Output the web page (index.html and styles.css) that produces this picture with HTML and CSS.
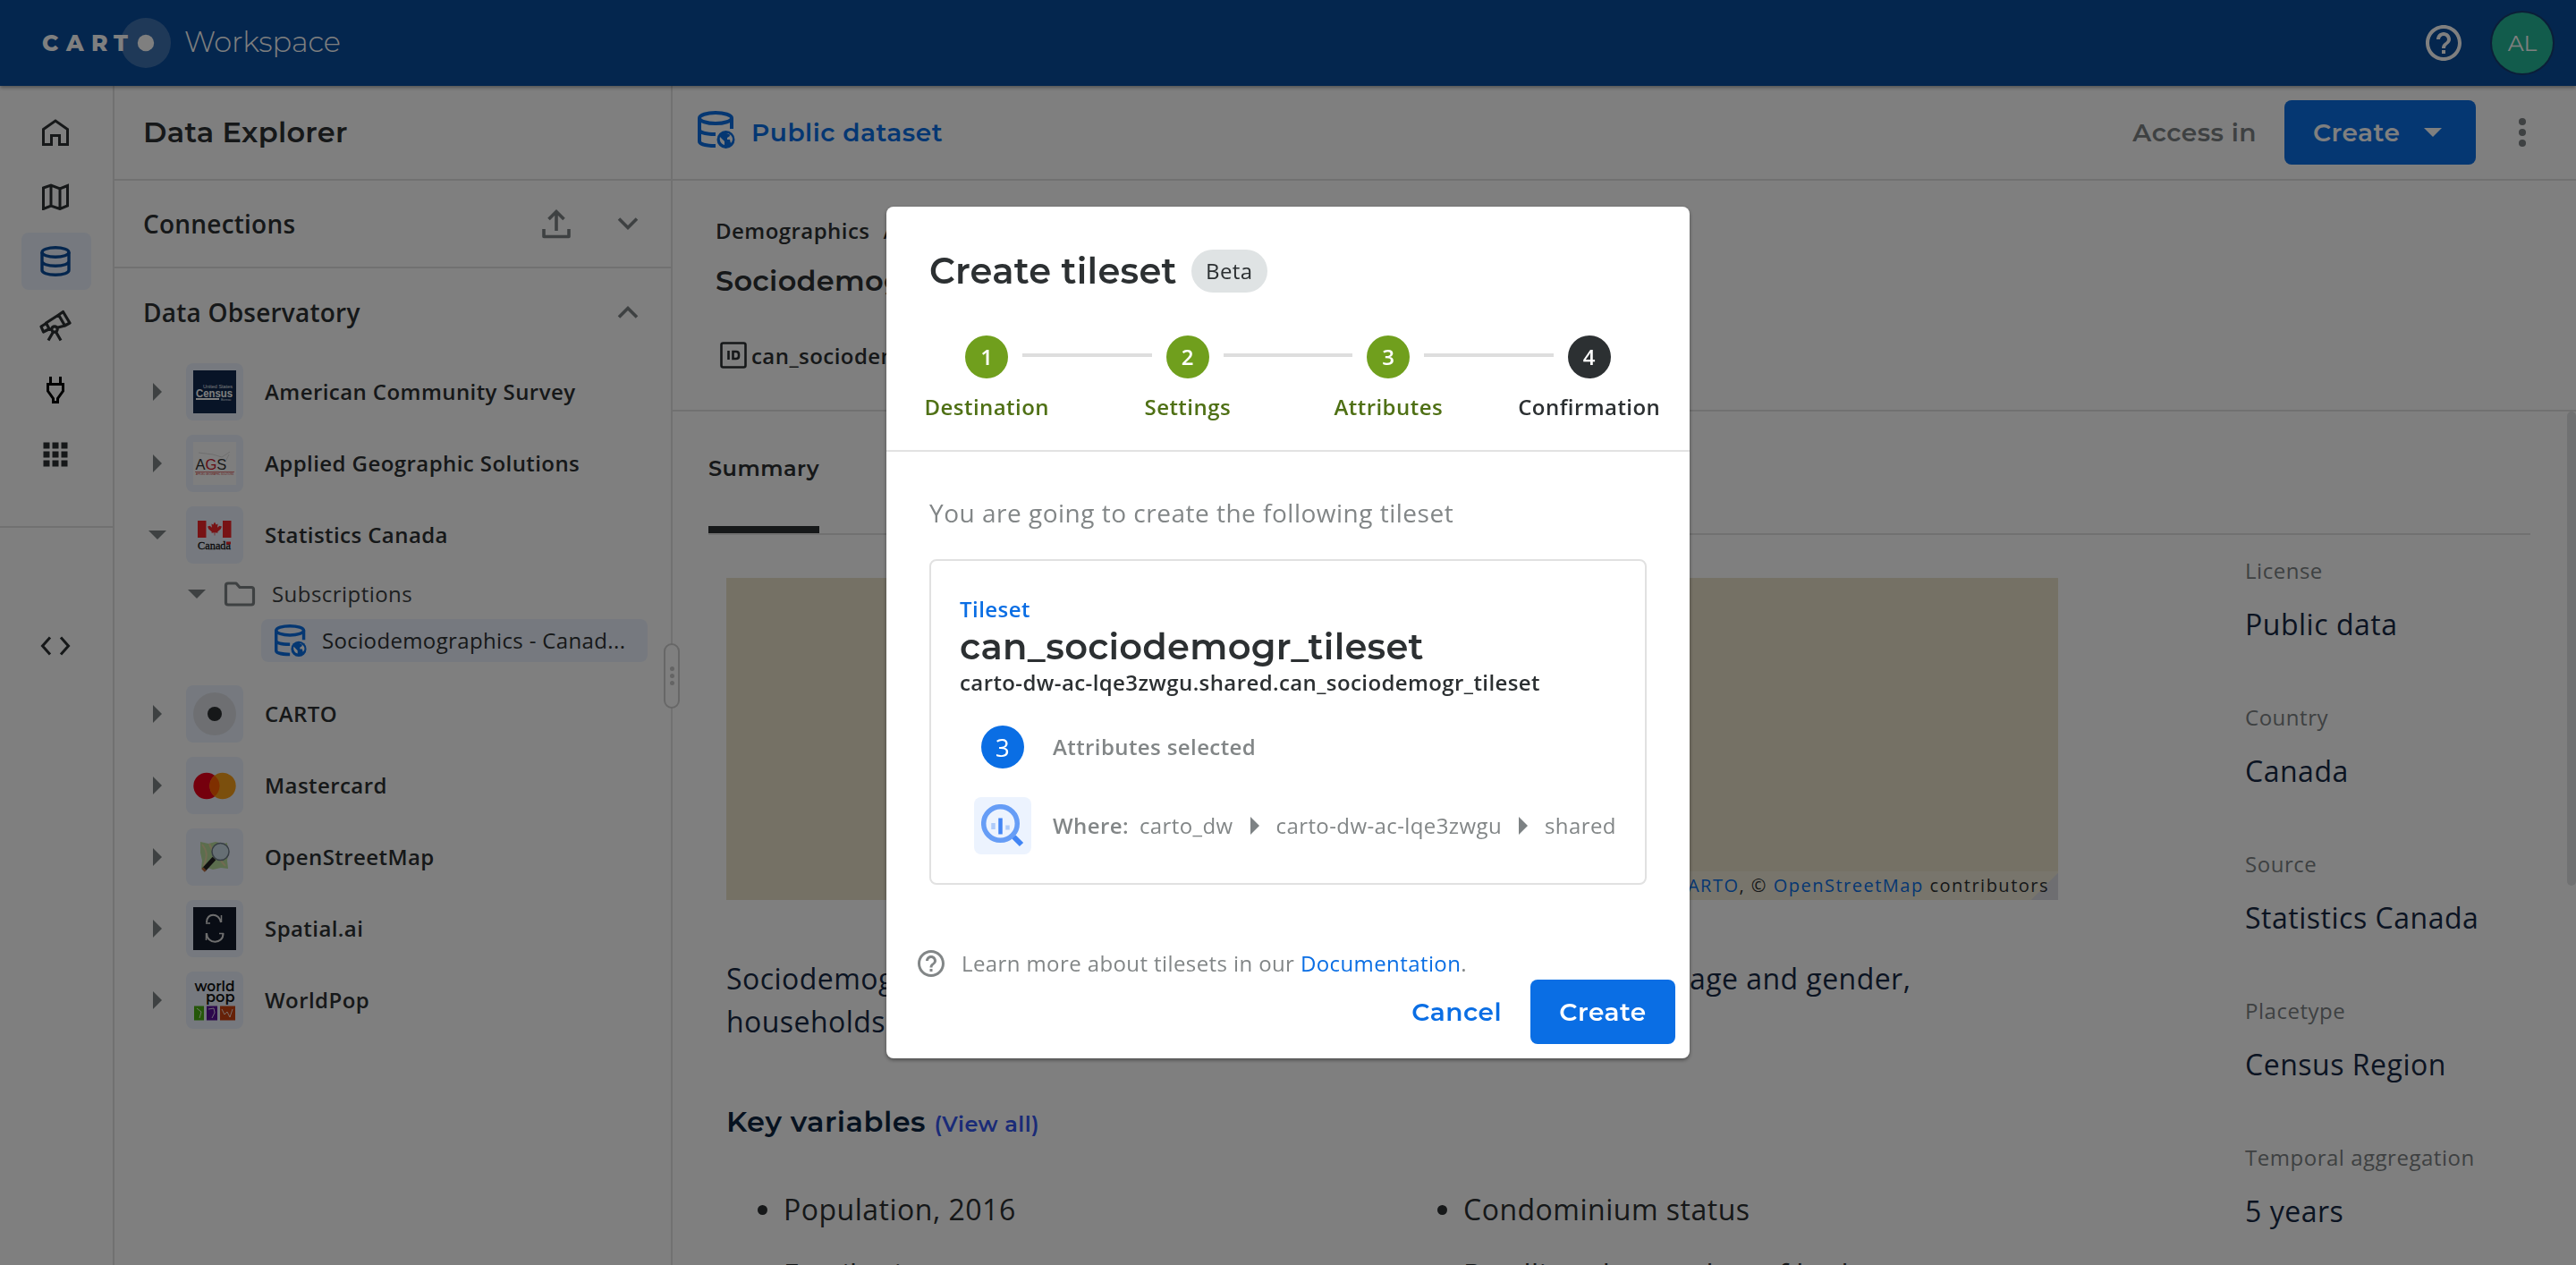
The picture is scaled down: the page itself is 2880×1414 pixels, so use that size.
FILE: index.html
```html
<!DOCTYPE html>
<html lang="en">
<head>
<meta charset="utf-8">
<title>Data Explorer - CARTO Workspace</title>
<link rel="stylesheet" href="styles.css">
</head>
<body>
<svg width="0" height="0" class="defs">
  <symbol id="i-dataset" viewBox="0 0 42 42">
    <g fill="none" stroke="currentColor" stroke-width="4">
      <ellipse cx="20" cy="8" rx="18" ry="6"/>
      <path d="M2 8v26c0 3 7 5 18 5M2 21c0 3 7 5 18 5M38 8v12"/>
    </g>
    <circle cx="31.5" cy="32" r="10" fill="currentColor"/>
    <path d="M25 29l5 5v4c-4-1-6-5-5-9zM32 25h3l1 3-3 2v2h3l1 4c4-4 2-10-5-11z" fill="#fff"/>
  </symbol>
  <symbol id="i-right" viewBox="0 0 20 20"><path d="M5 0l10 10L5 20z" fill="currentColor"/></symbol>
  <symbol id="i-down" viewBox="0 0 20 20"><path d="M0 5h20L10 15z" fill="currentColor"/></symbol>
  <symbol id="i-help" viewBox="0 0 24 24"><path fill="currentColor" d="M11 18h2v-2h-2v2zm1-16C6.480 2 2 6.480 2 12s4.480 10 10 10 10-4.480 10-10S17.520 2 12 2zm0 18c-4.410 0-8-3.590-8-8s3.590-8 8-8 8 3.590 8 8-3.590 8-8 8zm0-14c-2.210 0-4 1.790-4 4h2c0-1.100.9-2 2-2s2 .9 2 2c0 2-3 1.750-3 5h2c0-2.250 3-2.500 3-5 0-2.210-1.790-4-4-4z"/></symbol>
</svg>

<header class="topbar">
  <svg class="brand" width="154" height="58" viewBox="0 0 154 58">
    <circle cx="124" cy="29" r="28" fill="#fff" fill-opacity=".22"/>
    <text class="brand-text" x="8 35 63 88" y="38">CART</text>
    <circle cx="124" cy="29" r="9.200" fill="#fff"/>
  </svg>
  <span class="product">Workspace</span>
  <svg class="top-help" width="48" height="48"><use href="#i-help"/></svg>
  <div class="avatar">AL</div>
</header>

<div class="shell">
  <nav class="rail">
    <a class="rail-item"><svg width="30" height="30" fill="none" stroke="currentColor" stroke-width="3"><path d="M1.500 11.500L15 2l13.500 9.500v17H19.500V18.500h-9v10h-9z"/></svg></a>
    <a class="rail-item"><svg width="30" height="30" fill="none" stroke="currentColor" stroke-width="3"><path d="M1.500 5L10 2l10 4 8.500-3.500V25L20 28.500 10 25l-8.500 3.500zM10 2v23M20 6v22"/></svg></a>
    <a class="rail-item active"><svg width="34" height="34" fill="none" stroke="currentColor" stroke-width="3.400"><ellipse cx="17" cy="7" rx="15" ry="5.300"/><path d="M2 7v20c0 3 6 5.300 15 5.300S32 30 32 27V7M2 17c0 3 6 5.300 15 5.300S32 20 32 17"/></svg></a>
    <a class="rail-item"><svg width="36" height="36" fill="none" stroke="currentColor" stroke-width="3.200" stroke-linejoin="round"><path d="M21.500 6l5-3.500L34 15l-5.500 3zM21.500 6L7.500 15l4 7.500L28.500 18M7.500 15.500L2 19l2.500 6 6-3"/><circle cx="17" cy="22" r="3.200" fill="#fff"/><path d="M15.500 25L10 34.500M18.500 25l5.500 9.500"/></svg></a>
    <a class="rail-item plug"><svg width="20" height="30" fill="none" stroke="currentColor" stroke-width="3"><path d="M4.500 0v8.500M15.500 0v8.500M1.500 8.500h17v7.500l-6 8.500V28.500h-5v-4l-6-8.500z"/></svg></a>
    <a class="rail-item"><svg width="28" height="28" fill="currentColor"><path d="M.5.500h7v7h-7zM10.500.500h7v7h-7zM20.500.500h7v7h-7zM.5 10.500h7v7h-7zM10.500 10.500h7v7h-7zM20.500 10.500h7v7h-7zM.5 20.500h7v7h-7zM10.500 20.500h7v7h-7zM20.500 20.500h7v7h-7z"/></svg></a>
    <div class="rail-divider"></div>
    <a class="rail-item code"><svg width="34" height="22" fill="none" stroke="currentColor" stroke-width="3"><path d="M11 1.500L2.500 11l8.500 9.500M23 1.500L31.500 11 23 20.500"/></svg></a>
  </nav>

  <aside class="explorer">
    <h2 class="explorer-title">Data Explorer</h2>
    <div class="section-head ruled">
      <span>Connections</span>
      <svg class="upload" width="32" height="34" fill="none" stroke="currentColor" stroke-width="3.600"><path d="M2 23v8.500h28V23" stroke-linejoin="round"/><path d="M16 25V4M7.500 12L16 3.500 24.500 12"/></svg>
      <svg width="24" height="16" fill="none" stroke="currentColor" stroke-width="3.600"><path d="M2 2.500l10 10 10-10"/></svg>
    </div>
    <div class="section-head">
      <span>Data Observatory</span>
      <svg width="24" height="16" fill="none" stroke="currentColor" stroke-width="3.600"><path d="M2 13.500l10-10 10 10"/></svg>
    </div>
    <div class="tree">
      <div class="tree-row"><svg class="arrow"><use href="#i-right"/></svg>
        <span class="logo"><svg width="48" height="48"><rect width="48" height="48" fill="#10294f"/><text x="11" y="20" font-size="5" textLength="33" lengthAdjust="spacingAndGlyphs" fill="#e5e9f0" class="logo-sans">United States</text><text x="3" y="29.500" font-size="12.500" textLength="41" lengthAdjust="spacingAndGlyphs" fill="#fff" class="logo-sans logo-heavy">Census</text><path d="M3 32h26" stroke="#fff" stroke-width="2"/><text x="31" y="34" font-size="3.500" fill="#e5e9f0" class="logo-sans">Bureau</text></svg></span>
        <span>American Community Survey</span></div>
      <div class="tree-row"><svg class="arrow"><use href="#i-right"/></svg>
        <span class="logo"><svg width="48" height="48"><rect width="48" height="48" fill="#fdfdfd"/><path d="M6 12l16 2 10 3 3-2 6-4M36 22l4-8" fill="none" stroke="#ddd"/><text x="2.500" y="31" font-size="16.500" class="logo-sans" fill="#333">A<tspan fill="#c81428">G</tspan>S</text><path d="M2 33.500h44" stroke="#d66" stroke-width=".8"/><text x="3" y="37" font-size="3" textLength="42" lengthAdjust="spacingAndGlyphs" fill="#c33" class="logo-sans">APPLIED GEOGRAPHIC SOLUTIONS</text></svg></span>
        <span>Applied Geographic Solutions</span></div>
      <div class="tree-row"><svg class="arrow"><use href="#i-down"/></svg>
        <span class="logo"><svg width="48" height="48"><path d="M5 8h9.500v19H5zM33 8h9.500v19H33z" fill="#f0262a"/><path transform="translate(24 17.500) scale(.72)" d="M0-11l2.300 4.200 2.700-1.500-.8 6 3.300-3 3.500 1.200L9.500-.5 4.500 4l.4 1.800L.5 5.200v4.600h-1V5.200l-4.400.6.4-1.800-5-4.500L-11-4.100l3.500-1.200 3.300 3-.8-6 2.700 1.500z" fill="#f0262a"/><text x="5" y="40" font-size="12.500" textLength="37" lengthAdjust="spacingAndGlyphs" fill="#111" stroke="#111" stroke-width=".3" class="logo-serif">Canada</text><path d="M37 31.500h5v3h-5z" fill="#f0262a"/></svg></span>
        <span>Statistics Canada</span></div>
      <div class="tree-sub">
        <div class="sub-row"><svg class="arrow"><use href="#i-down"/></svg><svg class="folder" width="36" height="28" fill="none" stroke="currentColor" stroke-width="3.200" stroke-linejoin="round"><path d="M2.500 4.500q0-2.500 2.500-2.500h9l4 4.500h13q2.500 0 2.500 2.500v14.500q0 2.500-2.500 2.500H5q-2.500 0-2.500-2.500z"/></svg><span>Subscriptions</span></div>
        <div class="sub-leaf"><svg width="36" height="36"><use href="#i-dataset"/></svg><span>Sociodemographics - Canad...</span></div>
      </div>
      <div class="tree-row"><svg class="arrow"><use href="#i-right"/></svg>
        <span class="logo"><svg width="48" height="48"><circle cx="24" cy="24" r="24" fill="#dcdfe5"/><circle cx="24" cy="24" r="8" fill="#2c3032"/></svg></span>
        <span>CARTO</span></div>
      <div class="tree-row"><svg class="arrow"><use href="#i-right"/></svg>
        <span class="logo"><svg width="48" height="48"><circle cx="15" cy="24.500" r="14.700" fill="#eb001b"/><circle cx="33" cy="24.500" r="14.700" fill="#f79e1b"/><path d="M24 13a14.700 14.700 0 0 1 0 23 14.700 14.700 0 0 1 0-23z" fill="#ff5f00"/></svg></span>
        <span>Mastercard</span></div>
      <div class="tree-row"><svg class="arrow"><use href="#i-right"/></svg>
        <span class="logo"><svg width="48" height="48"><path d="M8 7l9 2 8-2 9 2 4-1 1 12-1 8 1 9-8-1-9 2-6-2-7 1 1-9-2-9z" fill="#b9dc9c"/><path d="M10 10c8 10 4 16 2 24M18 9c2 8 14 20 18 25" fill="none" stroke="#e5d5a5" stroke-width="2"/><circle cx="30.500" cy="18" r="9.500" fill="#cddfe8" stroke="#6f7c88" stroke-width="1.500"/><path d="M23.500 25.500L12 38" stroke="#222" stroke-width="5"/><path d="M13 37l-2 2" stroke="#b56a3c" stroke-width="5"/></svg></span>
        <span>OpenStreetMap</span></div>
      <div class="tree-row"><svg class="arrow"><use href="#i-right"/></svg>
        <span class="logo"><svg width="48" height="48"><rect width="48" height="48" fill="#121a2a"/><g fill="none" stroke="#ddd"><path d="M31 17C29 6 15 6 15 17" stroke-width="2"/><path d="M15 29C15 42 34 42 33.500 29" stroke-width="2"/><path d="M14 18h5M29 29.500h5M31.500 9v8M14.500 29v8" stroke-width="1.500"/></g></svg></span>
        <span>Spatial.ai</span></div>
      <div class="tree-row"><svg class="arrow"><use href="#i-right"/></svg>
        <span class="logo"><svg width="48" height="48"><text x="1.500" y="14" font-size="16" textLength="45" lengthAdjust="spacingAndGlyphs" class="logo-round" fill="#111">world</text><text x="14" y="26" font-size="16" textLength="32.500" lengthAdjust="spacingAndGlyphs" class="logo-round" fill="#111">pop</text><path d="M1 30.500h11v16H1z" fill="#4aae12"/><path d="M15 30.500h12v16H15z" fill="#5a1098"/><path d="M30 30.500h17v16H30z" fill="#cc4310"/><path d="M4 33l5 4-2 7M17 34l6-1 1 5-3 6M32 34l3 6 3-3 3 6 3-9" fill="none" stroke="#fff" stroke-width=".8"/></svg></span>
        <span>WorldPop</span></div>
    </div>
    <div class="resize"><i></i><i></i><i></i></div>
  </aside>

  <main class="main">
    <div class="main-bar">
      <svg class="ds-icon" width="42" height="42"><use href="#i-dataset"/></svg>
      <span class="ds-kind">Public dataset</span>
      <span class="access">Access in</span>
      <button class="btn create-menu"><span>Create</span><svg width="20" height="20"><use href="#i-down"/></svg></button>
      <svg class="more" width="8" height="32" fill="currentColor"><circle cx="4" cy="4" r="4"/><circle cx="4" cy="16" r="4"/><circle cx="4" cy="28" r="4"/></svg>
    </div>
    <section class="ds-head">
      <div class="crumbs">Demographics<span>/</span></div>
      <h1 class="ds-title">Sociodemographics</h1>
      <div class="ds-id"><svg width="30" height="30" fill="none" stroke="currentColor" stroke-width="2.600"><rect x="1.500" y="1.500" width="27" height="27" rx="2"/><path d="M9.500 10v10M14.500 11h3.500q3 0 3 3v2q0 3-3 3h-3.500z"/></svg><span>can_sociodemogr</span></div>
    </section>
    <section class="content">
      <div class="tabs"><span class="tab">Summary</span></div>
      <div class="columns">
        <div class="info">
          <div class="map"><p class="attribution">© <a>CARTO</a>, © <a>OpenStreetMap</a> contributors</p></div>
          <p class="description"><span class="lead">Sociodemographics by</span>age and gender,<br>households</p>
          <h3 class="vars-title">Key variables <a>(View all)</a></h3>
          <ul class="vars"><li>Population, 2016</li><li>Condominium status</li><li>Family size</li><li>Dwellings by number of bedrooms</li></ul>
        </div>
        <dl class="meta">
          <dt>License</dt><dd>Public data</dd>
          <dt>Country</dt><dd>Canada</dd>
          <dt>Source</dt><dd>Statistics Canada</dd>
          <dt>Placetype</dt><dd>Census Region</dd>
          <dt>Temporal aggregation</dt><dd>5 years</dd>
        </dl>
      </div>
      <div class="scrollbar"></div>
    </section>
  </main>
</div>

<div class="backdrop">
  <div class="modal">
    <div class="modal-head">
      <h2 class="modal-title">Create tileset <span class="chip">Beta</span></h2>
      <ol class="stepper">
        <li class="step done"><div class="step-top"><b>1</b></div><span>Destination</span></li>
        <li class="step done"><div class="step-top"><b>2</b></div><span>Settings</span></li>
        <li class="step done"><div class="step-top"><b>3</b></div><span>Attributes</span></li>
        <li class="step"><div class="step-top"><b>4</b></div><span>Confirmation</span></li>
      </ol>
    </div>
    <div class="modal-body">
      <p class="intro">You are going to create the following tileset</p>
      <div class="card">
        <div class="card-kind">Tileset</div>
        <div class="card-name">can_sociodemogr_tileset</div>
        <div class="card-path">carto-dw-ac-lqe3zwgu.shared.can_sociodemogr_tileset</div>
        <div class="card-row"><span class="slot"><b class="count">3</b></span><strong>Attributes selected</strong></div>
        <div class="card-row"><span class="slot bq"><svg width="48" height="48" fill="none"><circle cx="21.500" cy="21.500" r="18.800" stroke="#669df6" stroke-width="5.500"/><path d="M13.500 21v7M29.500 23.500v5" stroke="#aecbfa" stroke-width="4.500"/><path d="M21.500 15.500v18" stroke="#4285f4" stroke-width="4.500"/><path d="M36.500 36.500l8.500 8.500" stroke="#4285f4" stroke-width="6"/></svg></span>
          <strong>Where:</strong><span class="where">carto_dw</span><svg class="arrow"><use href="#i-right"/></svg><span>carto-dw-ac-lqe3zwgu</span><svg class="arrow"><use href="#i-right"/></svg><span>shared</span></div>
      </div>
    </div>
    <div class="modal-foot">
      <p class="learn"><svg width="36" height="36"><use href="#i-help"/></svg><span>Learn more about tilesets in our <a>Documentation</a>.</span></p>
      <div class="actions"><button class="link-btn">Cancel</button><button class="btn">Create</button></div>
    </div>
  </div>
</div>
</body>
</html>
```
FILE: styles.css
```css
* { box-sizing: border-box; }

body, h1, h2, h3, p, ul, ol, dl, dd { margin: 0; padding: 0; }

body {
  height: 1414px;
  display: flex;
  flex-direction: column;
  overflow: hidden;
  background: #fff;
  color: #2c3032;
  font: 400 24px "Open Sans", sans-serif;
  letter-spacing: 0.45px;
  white-space: nowrap;
}

svg { display: block; flex: none; }
.defs { position: absolute; }
ul, ol { list-style: none; }
a { color: #0a6ee4; }
button { border: 0; padding: 0; background: none; }
.arrow { width: 20px; height: 20px; color: #7d8284; }

/* top bar */
.topbar {
  position: relative;
  z-index: 1;
  flex: none;
  height: 96px;
  padding: 0 26px 0 39px;
  display: flex;
  align-items: center;
  background: #094c9c;
  box-shadow: 0 2px 4px rgba(0, 0, 0, 0.35);
  color: #fff;
}
.brand-text { font: 800 25px Montserrat, sans-serif; letter-spacing: 0; fill: #fff; }
.product { margin-left: 13px; padding-bottom: 3px; font: 300 32px Montserrat, sans-serif; letter-spacing: -0.1px; }
.top-help { margin-left: auto; margin-right: 30px; }
.avatar {
  width: 68px;
  height: 68px;
  border-radius: 50%;
  display: flex;
  align-items: center;
  justify-content: center;
  background: #24b898;
  box-shadow: 0 0 0 2px #163d70;
  font: 400 25px Montserrat, sans-serif;
  letter-spacing: 0;
}

.shell { flex: 1; min-height: 0; display: flex; }

/* navigation rail */
.rail {
  width: 128px;
  flex: none;
  padding-top: 20px;
  border-right: 2px solid #e2e2e2;
  display: flex;
  flex-direction: column;
  gap: 8px;
}
.rail-item {
  width: 78px;
  height: 64px;
  flex: none;
  margin-left: 24px;
  padding-right: 2px;
  border-radius: 8px;
  display: flex;
  align-items: center;
  justify-content: center;
  color: #2c3032;
}
.rail-item.active { background: #ecf3fe; color: #094c9c; }
.rail-item.plug { color: #000; }
.rail-divider { height: 2px; margin: 40px 0 92px; background: #e2e2e2; }

/* explorer panel */
.explorer { position: relative; width: 624px; flex: none; border-right: 2px solid #e2e2e2; }
.explorer-title {
  height: 106px;
  padding-left: 32px;
  border-bottom: 2px solid #e2e2e2;
  font: 600 32px/104px Montserrat, sans-serif;
  letter-spacing: 0.3px;
}
.section-head {
  height: 98px;
  padding: 0 36px 0 32px;
  display: flex;
  align-items: center;
  font-size: 28px;
  font-weight: 600;
  letter-spacing: 0.22px;
}
.section-head.ruled { border-bottom: 2px solid #e2e2e2; }
.section-head svg { color: #7d8284; }
.section-head span { margin-right: auto; }
.section-head .upload { margin-right: 52px; }
.tree { padding: 8px 26px 0 38px; }
.tree-row { height: 64px; margin-bottom: 16px; display: flex; align-items: center; font-weight: 600; }
.tree-row > span:last-child { padding-bottom: 2px; letter-spacing: 0.43px; }
.logo {
  width: 64px;
  height: 64px;
  margin: 0 24px 0 22px;
  flex: none;
  border-radius: 8px;
  display: flex;
  align-items: center;
  justify-content: center;
  background: #ecf3fe;
}
.logo text { letter-spacing: 0; font-weight: 400; }
.logo-sans { font-family: "Liberation Sans", sans-serif; }
.logo text.logo-heavy { font-weight: 700; }
.logo text.logo-round { font-family: Montserrat, sans-serif; font-weight: 600; }
.logo-serif { font-family: "Liberation Serif", serif; }
.tree-sub { margin: -6px 0 26px; }
.sub-row { height: 48px; padding: 0 0 1px 44px; display: flex; align-items: center; color: #3d4143; }
.folder { margin: 0 18px 0 20px; color: #7d8284; }
.sub-leaf {
  height: 48px;
  margin: 4px 0 0 126px;
  padding-left: 15px;
  border-radius: 8px;
  display: flex;
  align-items: center;
  gap: 17px;
  background: #ecf3fe;
  color: #2c3032;
  letter-spacing: 0.36px;
}
.sub-leaf span { padding-bottom: 1px; }
.sub-leaf svg { color: #0a6ee4; }
.resize {
  position: absolute;
  z-index: 2;
  left: 614px;
  top: 623px;
  width: 18px;
  height: 73px;
  border: 2px solid #cfcfcf;
  border-radius: 9px;
  display: flex;
  flex-direction: column;
  align-items: center;
  justify-content: center;
  gap: 3px;
  background: #fff;
}
.resize i { width: 5px; height: 5px; border-radius: 50%; background: #c8c8c8; }

/* main area */
.main { flex: 1; min-width: 0; display: flex; flex-direction: column; }
.main-bar {
  height: 106px;
  flex: none;
  padding: 0 56px 0 28px;
  border-bottom: 2px solid #e2e2e2;
  display: flex;
  align-items: center;
}
.ds-icon { color: #0a6ee4; position: relative; top: -3px; }
.ds-kind { margin-left: 18px; color: #0a6ee4; font: 600 28px Montserrat, sans-serif; letter-spacing: 0.5px; }
.access { margin-left: auto; color: #7d8284; font: 600 28px Montserrat, sans-serif; letter-spacing: 0.5px; }
.btn {
  width: 162px;
  height: 72px;
  border-radius: 8px;
  display: flex;
  align-items: center;
  justify-content: center;
  background: #0a6ee4;
  color: #fff;
  font: 600 28px Montserrat, sans-serif;
  letter-spacing: 0.5px;
}
.btn.create-menu { width: 214px; margin: 0 48px 0 31px; padding-left: 32px; gap: 27px; justify-content: flex-start; }
.more { color: #7d8284; }

.ds-head { height: 258px; flex: none; padding: 38px 0 0 48px; border-bottom: 2px solid #e2e2e2; }
.crumbs { height: 36px; font-weight: 600; line-height: 36px; }
.crumbs span { margin-left: 15px; }
.ds-title { margin-top: 14px; font: 600 32px/48px Montserrat, sans-serif; letter-spacing: 0.3px; }
.ds-id { margin-top: 41px; height: 36px; padding-left: 5px; display: flex; align-items: center; gap: 5px; font-weight: 600; }

.content { position: relative; flex: 1; min-height: 0; padding: 0 51px 0 40px; overflow: hidden; }
.tabs { height: 138px; border-bottom: 2px solid #e2e2e2; display: flex; }
.tab {
  height: 136px;
  border-bottom: 8px solid #2c3032;
  font: 600 24px/127px Montserrat, sans-serif;
  letter-spacing: 0.5px;
}
.columns { padding-left: 20px; display: flex; }
.info { width: 1489px; flex: none; padding-top: 48px; }
.map { height: 360px; display: flex; align-items: flex-end; justify-content: flex-end; background: #eae2cb; }
.attribution {
  height: 32px;
  padding: 0 10px;
  background: linear-gradient(135deg, transparent calc(100% - 22px), #dcdde2 calc(100% - 21px)), #f0ebd9;
  font-size: 20px;
  line-height: 32px;
  letter-spacing: 1.5px;
}
.description { margin-top: 64px; color: #162945; font-size: 32px; line-height: 48px; }
.lead { display: inline-block; width: 1077px; }
.vars-title { height: 48px; margin-top: 64px; color: #0d2540; font: 600 32px/48px Montserrat, sans-serif; letter-spacing: 0.5px; }
.vars-title a { color: #3556ee; font-size: 24px; line-height: 24px; letter-spacing: 0.5px; }
.vars { margin-top: 50px; display: grid; grid-template-columns: 760px 1fr; row-gap: 25px; }
.vars li { padding-left: 35px; display: flex; align-items: center; gap: 18px; font-size: 32px; line-height: 48px; letter-spacing: 0.5px; }
.vars li::before { content: ""; width: 11px; height: 11px; border-radius: 50%; background: currentColor; }
.meta { margin-left: 209px; padding-top: 20px; }
.meta dt { color: #7d8284; line-height: 40px; letter-spacing: 0.52px; }
.meta dd { margin: 16px 0 60px; color: #162945; font-size: 32px; line-height: 48px; letter-spacing: 0.52px; }
.scrollbar { position: absolute; right: 0; top: 0; width: 10px; height: 530px; border-radius: 8px; background: #e0e3e4; }

/* dialog */
.backdrop {
  position: fixed;
  inset: 0;
  z-index: 10;
  display: flex;
  align-items: center;
  justify-content: center;
  background: rgba(0, 0, 0, 0.5);
}
.modal {
  width: 898px;
  height: 952px;
  border-radius: 8px;
  display: flex;
  flex-direction: column;
  background: #fff;
  box-shadow: 0 2px 4px rgba(0, 0, 0, 0.4);
}
.modal-head { height: 274px; padding-top: 48px; border-bottom: 2px solid #e2e2e2; }
.modal-title {
  height: 48px;
  padding-left: 48px;
  display: flex;
  align-items: center;
  font: 600 40px/48px Montserrat, sans-serif;
  letter-spacing: 0.25px;
}
.chip {
  width: 85px;
  height: 48px;
  margin-left: 16px;
  border-radius: 24px;
  background: #dfe3e4;
  font: 400 24px/48px "Open Sans", sans-serif;
  letter-spacing: 0.4px;
  text-align: center;
}
.stepper { margin-top: 48px; display: flex; }
.step { flex: 1; text-align: center; font-weight: 600; }
.step > span { display: block; margin-top: 14px; line-height: 36px; }
.step-top { display: flex; justify-content: space-between; }
.step-top::before, .step-top::after {
  content: "";
  width: 72.250px;
  height: 4px;
  margin-top: 20px;
  background: #dedede;
}
.step:first-child .step-top::before, .step:last-child .step-top::after { background: none; }
.step b {
  width: 48px;
  height: 48px;
  border-radius: 50%;
  background: #2c3032;
  color: #fff;
  font-weight: 600;
  line-height: 48px;
}
.step.done b { background: #709f1d; }
.step.done { color: #4f7015; }

.modal-body { padding: 47px 48px 0; }
.intro { color: #828687; font-size: 28px; line-height: 42px; letter-spacing: 0.5px; }
.card { height: 364px; margin-top: 31px; padding: 36px 0 0 32px; border: 2px solid #e1e1e1; border-radius: 8px; }
.card-kind { color: #0a6ee4; font-weight: 600; line-height: 36px; }
.card-name { font: 600 40px/48px Montserrat, sans-serif; letter-spacing: 0.25px; }
.card-path { font-weight: 600; line-height: 32px; letter-spacing: 0.4px; }
.card-row { height: 48px; margin: 32px 0 0 16px; display: flex; align-items: center; color: #828687; letter-spacing: 0.4px; }
.card-row + .card-row { height: 64px; }
.card-row .arrow { margin: 0 14px; }
.card-row strong, .card-row > span { padding-bottom: 1px; }
.card-row > .slot { padding-bottom: 0; }
.slot { width: 64px; margin-right: 24px; display: flex; justify-content: center; }
.slot.bq { height: 64px; border-radius: 8px; align-items: center; background: #ecf3fe; }
.card-row strong { font-weight: 600; }
.where { margin-left: 12px; }
.count {
  width: 48px;
  height: 48px;
  border-radius: 50%;
  background: #0a6ee4;
  color: #fff;
  font-size: 28px;
  font-weight: 400;
  line-height: 48px;
  text-align: center;
}
.modal-foot { margin-top: auto; padding: 0 16px 16px 32px; }
.learn { height: 36px; display: flex; align-items: center; gap: 16px; color: #828687; letter-spacing: 0.4px; }
.learn span { padding-bottom: 1px; }
.actions { display: flex; justify-content: flex-end; align-items: center; gap: 32px; }
.link-btn { color: #0a6ee4; font: 600 28px Montserrat, sans-serif; letter-spacing: 0.5px; }
```
